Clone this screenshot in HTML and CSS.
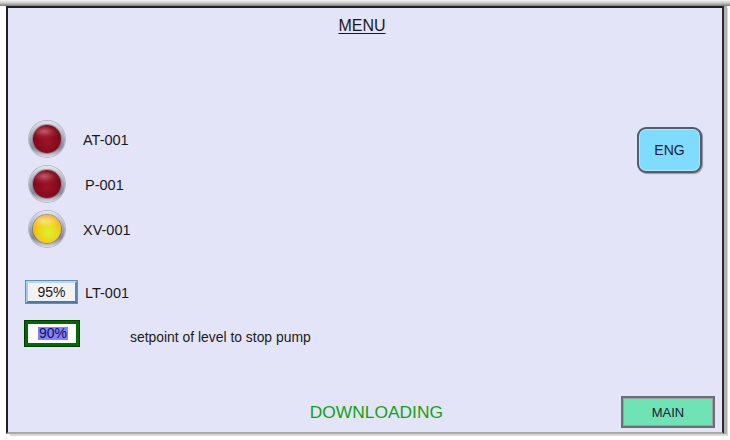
FILE: index.html
```html
<!DOCTYPE html>
<html>
<head>
<meta charset="utf-8">
<link rel="stylesheet" href="styles.css">
</head>
<body>
<div class="screen">
  <div class="panel">
    <div class="header"><span class="title">MENU</span></div>
    <div class="body">
      <div class="left">
        <div class="lamps">
          <div class="lamp-row"><span class="lamp red"></span><span class="label">AT-001</span></div>
          <div class="lamp-row"><span class="lamp red"></span><span class="label shift">P-001</span></div>
          <div class="lamp-row"><span class="lamp yellow"></span><span class="label">XV-001</span></div>
        </div>
        <div class="value-row lt">
          <span class="valbox blue">95%</span><span class="label">LT-001</span>
        </div>
        <div class="value-row sp">
          <span class="valbox green"><span class="sel">90%</span></span><span class="setpoint">setpoint of level to stop pump</span>
        </div>
      </div>
      <div class="right">
        <button class="btn eng">ENG</button>
      </div>
    </div>
    <div class="footer">
      <span class="status">DOWNLOADING</span>
      <button class="btn main">MAIN</button>
    </div>
  </div>
</div>
</body>
</html>
```

FILE: styles.css
```css
html, body {
  margin: 0;
  padding: 0;
  background: #ffffff;
}
.screen {
  width: 730px;
  height: 440px;
  box-sizing: border-box;
  padding: 6px 6px 6px 6px;
  background: linear-gradient(to bottom, #f4f4f4 0px, #c8c8c8 3px, #7a7a7a 6px, #ffffff 6px);
  font-family: "Liberation Sans", Arial, sans-serif;
  color: #1a1a1a;
}
.panel {
  width: 718px;
  height: 428px;
  box-sizing: border-box;
  background: #e4e4f8;
  border-top: 2px solid #202020;
  border-left: 2px solid #202020;
  border-right: 2px solid #2a2a2a;
  border-bottom: 2px solid #a8a8a8;
  box-shadow: 3px 0 0 #b0b0b0, 4px 2px 0 #d8d8d8;
  display: flex;
  flex-direction: column;
}
.header {
  padding-top: 9px;
  height: 18px;
  display: flex;
  justify-content: center;
}
.title {
  font-size: 16px;
  line-height: 18px;
  text-decoration: underline;
  text-underline-offset: 2px;
  padding-right: 6px;
}
.body {
  flex: 1;
  display: flex;
  justify-content: space-between;
}
.left {
  padding-top: 86px;
  padding-left: 17px;
  display: flex;
  flex-direction: column;
}
.lamps {
  display: flex;
  flex-direction: column;
  gap: 9px;
  padding-left: 4px;
}
.lamp-row {
  display: flex;
  align-items: center;
  gap: 18px;
  height: 36px;
}
.label {
  font-size: 14.5px;
  line-height: 16px;
  padding-top: 2px;
}
.label.shift {
  margin-left: 2px;
}
.lamp {
  width: 36px;
  height: 36px;
  border-radius: 50%;
  box-sizing: border-box;
  position: relative;
  background: linear-gradient(to bottom, #e4e4ec 0%, #b0b0bc 40%, #88889a 75%, #d8d8e2 100%);
  box-shadow: 0 0 0 1px #b8b8c6;
}
.lamp::before {
  content: "";
  position: absolute;
  left: 4px;
  top: 4px;
  width: 28px;
  height: 28px;
  border-radius: 50%;
  box-shadow: 0 0 0 1px rgba(90,90,100,0.5);
}
.lamp.red::before {
  background:
    radial-gradient(ellipse 60% 30% at 40% 22%, rgba(255,170,180,0.5) 0%, rgba(255,150,160,0.12) 60%, rgba(255,150,160,0) 100%),
    radial-gradient(circle at 50% 60%, #9c1428 0%, #860a1c 50%, #580010 100%);
}
.lamp.yellow::before {
  background:
    radial-gradient(ellipse 55% 25% at 40% 20%, rgba(255,255,220,0.55) 0%, rgba(255,255,200,0) 100%),
    radial-gradient(circle at 55% 62%, #dcf230 0%, #ecd41c 40%, #ffa810 75%, #ff9000 100%);
}
.value-row {
  display: flex;
  align-items: center;
}
.value-row.lt {
  margin-top: 33px;
  gap: 7px;
}
.value-row.sp {
  margin-top: 17px;
  gap: 51px;
}
.valbox {
  box-sizing: border-box;
  display: flex;
  align-items: center;
  justify-content: center;
  font-size: 14px;
  line-height: 16px;
}
.valbox.blue {
  width: 53px;
  height: 24px;
  background: #f2f2f4;
  border-top: 3px solid #b4d8f4;
  border-left: 3px solid #a4ccee;
  border-bottom: 3px solid #4878a8;
  border-right: 3px solid #5888b8;
  outline: 1px solid #6a8cb0;
  outline-offset: -1px;
}
.valbox.green {
  width: 54px;
  height: 25px;
  background: #ffffff;
  border: 3px solid #006a00;
  box-shadow: 0 0 0 1px #003a00;
  justify-content: flex-start;
  padding-left: 10px;
}
.sel {
  background: #8282ff;
  color: #10104a;
  line-height: 13px;
  padding: 0 1px;
}
.setpoint {
  font-size: 13.9px;
  line-height: 16px;
  padding-top: 7px;
}
.right {
  padding-top: 92px;
  padding-right: 20px;
}
.btn {
  font-family: "Liberation Sans", Arial, sans-serif;
  color: #1a1a3a;
  padding: 0;
  margin: 0;
  cursor: default;
}
.eng {
  width: 65px;
  height: 46px;
  border-radius: 9px;
  background: #80dcff;
  border: 2px solid #5a5a66;
  box-shadow: inset 0 0 0 1px #a8e8ff, 1px 1px 1px rgba(0,0,0,0.35);
  font-size: 14px;
}
.footer {
  display: flex;
  justify-content: flex-end;
  align-items: center;
  padding-bottom: 4px;
}
.status {
  font-size: 17.4px;
  line-height: 20px;
  color: #14a014;
  margin-right: 178px;
  margin-bottom: 0px;
}
.main {
  width: 94px;
  height: 32px;
  margin-right: 7px;
  background: #6fe3b4;
  border: 2px solid #6e6e78;
  box-shadow: inset 0 0 0 1px #9aa0a0;
  font-size: 13px;
}
```
